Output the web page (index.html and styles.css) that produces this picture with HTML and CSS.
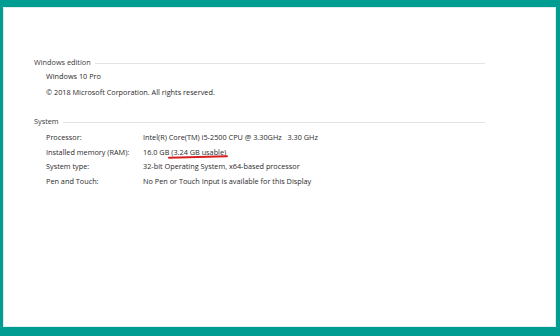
FILE: index.html
```html
<!DOCTYPE html>
<html>
<head>
<meta charset="utf-8">
<link rel="stylesheet" href="styles.css">
</head>
<body>
<div class="frame">
  <div class="panel">
    <section class="group">
      <div class="group-title"><span>Windows edition</span><i class="rule"></i></div>
      <div class="plain">Windows 10 Pro</div>
      <div class="plain">© 2018 Microsoft Corporation. All rights reserved.</div>
    </section>
    <section class="group sys">
      <div class="group-title"><span>System</span><i class="rule"></i></div>
      <div class="row"><span class="label">Processor:</span><span class="value">Intel(R) Core(TM) i5-2500 CPU @ 3.30GHz&nbsp;&nbsp; 3.30 GHz</span></div>
      <div class="row"><span class="label">Installed memory (RAM):</span><span class="value">16.0 GB <span class="mark">(3.24 GB usable)</span></span></div>
      <div class="row"><span class="label">System type:</span><span class="value">32-bit Operating System, x64-based processor</span></div>
      <div class="row"><span class="label">Pen and Touch:</span><span class="value">No Pen or Touch Input is available for this Display</span></div>
    </section>
  </div>
</div>
</body>
</html>
```
FILE: styles.css
```css
html, body { margin: 0; padding: 0; }
body {
  width: 560px;
  height: 336px;
  background: #009e92;
  font-family: "Open Sans", "Noto Sans", sans-serif;
  font-size: 7.3px;
  color: #2a2a2a;
}
.frame {
  box-sizing: border-box;
  height: 336px;
  padding: 7px 4px 9px 3px;
}
.panel {
  background: #fff;
  height: 100%;
  box-sizing: border-box;
  padding: 47px 0 0 30px;
  border: 1px solid #dfeeed;
}
.group { width: 451px; }
.group-title {
  display: flex;
  align-items: center;
  height: 14px;
  color: #3a3a3a;
}
.rule {
  flex: 1;
  height: 1px;
  background: #e3e3e3;
  margin-left: 4px;
  margin-top: 2px;
}
.plain {
  padding-left: 12px;
  height: 15.5px;
  line-height: 15.5px;
}
.plain:first-of-type { margin-top: 1px; }
.sys { margin-top: 14px; }
.row {
  display: flex;
  padding-left: 12px;
  height: 14.5px;
  line-height: 14.5px;
}
.row:nth-child(2) { margin-top: 2px; }
.label { width: 97px; }
.mark {
  position: relative;
}
.mark::after {
  content: "";
  position: absolute;
  left: -3px;
  right: -2px;
  bottom: -1px;
  height: 2px;
  border-radius: 1px;
  background: #d42020;
  transform: rotate(-1.5deg);
}
```
